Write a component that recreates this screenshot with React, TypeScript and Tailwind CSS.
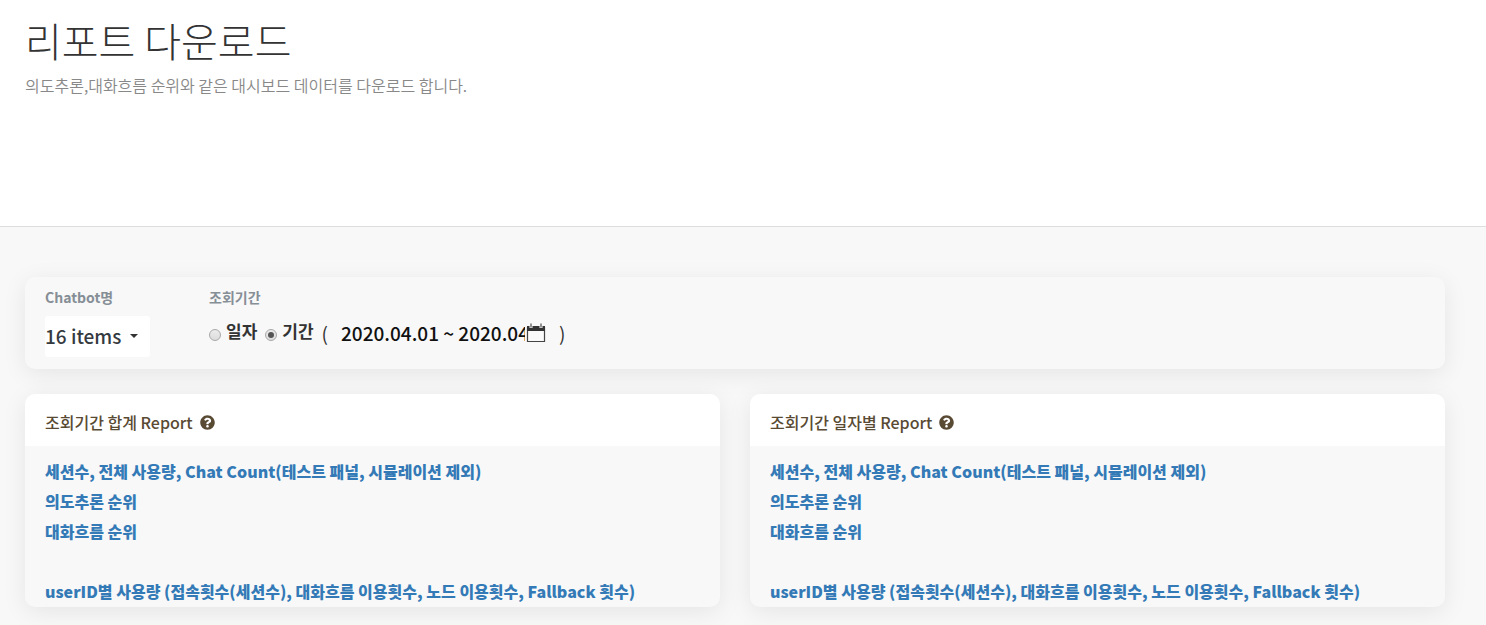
import React from "react";
import { FaQuestionCircle } from "react-icons/fa";

const reportLinks = [
  "세션수, 전체 사용량, Chat Count(테스트 패널, 시뮬레이션 제외)",
  "의도추론 순위",
  "대화흐름 순위",
  "",
  "userID별 사용량 (접속횟수(세션수), 대화흐름 이용횟수, 노드 이용횟수, Fallback 횟수)",
];

const radioClass =
  "mt-1 flex h-3 w-3 appearance-none items-center justify-center rounded-full border border-[#a8a8a8] bg-linear-to-b from-[#ececec] to-[#dcdcdc] before:h-[6px] before:w-[6px] before:rounded-full checked:before:bg-[#555]";

function CalendarIcon() {
  return (
    <svg width="20" height="20" viewBox="0 0 20 20" aria-hidden="true">
      <path d="M1.5 4v14.5h17V4" fill="#fafafa" stroke="#444" strokeWidth="1.2" />
      <path d="M1 3h18v5H1z" fill="#333" />
      <path d="M3.5 0.5h3v4.5h-3zM13.5 0.5h3v4.5h-3z" fill="#f7f7f7" />
      <path d="M5 0.5v4M15 0.5v4" stroke="#666" strokeWidth="1.4" />
    </svg>
  );
}

function ReportCard({ title }: { title: string }) {
  return (
    <section className="overflow-hidden rounded-[10px] bg-[#f8f8f8] shadow-[0_5px_25px_rgba(0,0,0,0.08)]">
      <h2 className="flex h-[52px] items-center gap-[7px] bg-white px-5 pt-1 text-[16px] font-medium text-[#594a33]">
        {title}
        <FaQuestionCircle className="h-[15px] w-[15px]" />
      </h2>
      <ul className="px-5 pt-[10px] pb-px text-[16px] leading-[30px] font-black text-[#337ab7]">
        {reportLinks.map((text, i) => (
          <li key={i} className="h-[30px] whitespace-nowrap">
            {text && <a href="#">{text}</a>}
          </li>
        ))}
      </ul>
    </section>
  );
}

export default function App() {
  return (
    <div className="flex min-h-screen flex-col bg-[#f8f8f8] font-['Noto_Sans_CJK_KR',sans-serif]">
      <header className="border-b border-[#ddd] bg-white px-[25px] pt-[10px] pb-[128px]">
        <h1 className="text-[40px] leading-[60px] font-light text-[#333]">리포트 다운로드</h1>
        <p className="mt-[2px] text-[16px] leading-[26px] font-[350] text-[#888]">
          의도추론,대화흐름 순위와 같은 대시보드 데이터를 다운로드 합니다.
        </p>
      </header>

      <main className="flex flex-col gap-[25px] pt-[50px] pr-[41px] pb-[18px] pl-[25px]">
        <section className="flex gap-[59px] rounded-[10px] bg-[#f8f8f8] px-5 pt-[10px] pb-3 shadow-[0_5px_25px_rgba(0,0,0,0.08)]">
          <div>
            <label htmlFor="chatbot" className="block text-[14px] leading-[20px] font-bold text-[#868e96]">
              Chatbot명
            </label>
            <div className="relative mt-[9px] w-[105px]">
              <select
                id="chatbot"
                className="h-[41px] w-full appearance-none rounded-[3px] bg-white text-[19px] font-medium text-[#343a40]"
              >
                <option>16 items</option>
              </select>
              <svg
                className="pointer-events-none absolute top-[18px] right-3"
                width="8"
                height="4"
                viewBox="0 0 8 4"
                aria-hidden="true"
              >
                <path d="M0 0h8L4 4z" fill="#333" />
              </svg>
            </div>
          </div>

          <fieldset>
            <legend className="block text-[14px] leading-[20px] font-bold text-[#868e96]">조회기간</legend>
            <div className="mt-[9px] flex h-[34px] items-center text-[19px] text-[#333]">
              <input id="by-day" type="radio" name="period" className={radioClass} />
              <label htmlFor="by-day" className="mr-2 ml-[5px] pb-1 text-[17px] leading-[24px] font-bold">
                일자
              </label>
              <input id="by-range" type="radio" name="period" defaultChecked className={radioClass} />
              <label htmlFor="by-range" className="mr-2 ml-[5px] pb-1 text-[17px] leading-[24px] font-bold">
                기간
              </label>
              <span>(</span>
              <input
                type="text"
                aria-label="조회기간"
                defaultValue="2020.04.01 ~ 2020.04"
                className="ml-[13px] w-[184px] bg-transparent font-medium text-[#111]"
              />
              <button type="button" aria-label="달력" className="ml-px">
                <CalendarIcon />
              </button>
              <span className="ml-[13px]">)</span>
            </div>
          </fieldset>
        </section>

        <div className="grid grid-cols-2 gap-[30px]">
          <ReportCard title="조회기간 합계 Report" />
          <ReportCard title="조회기간 일자별 Report" />
        </div>
      </main>
    </div>
  );
}
